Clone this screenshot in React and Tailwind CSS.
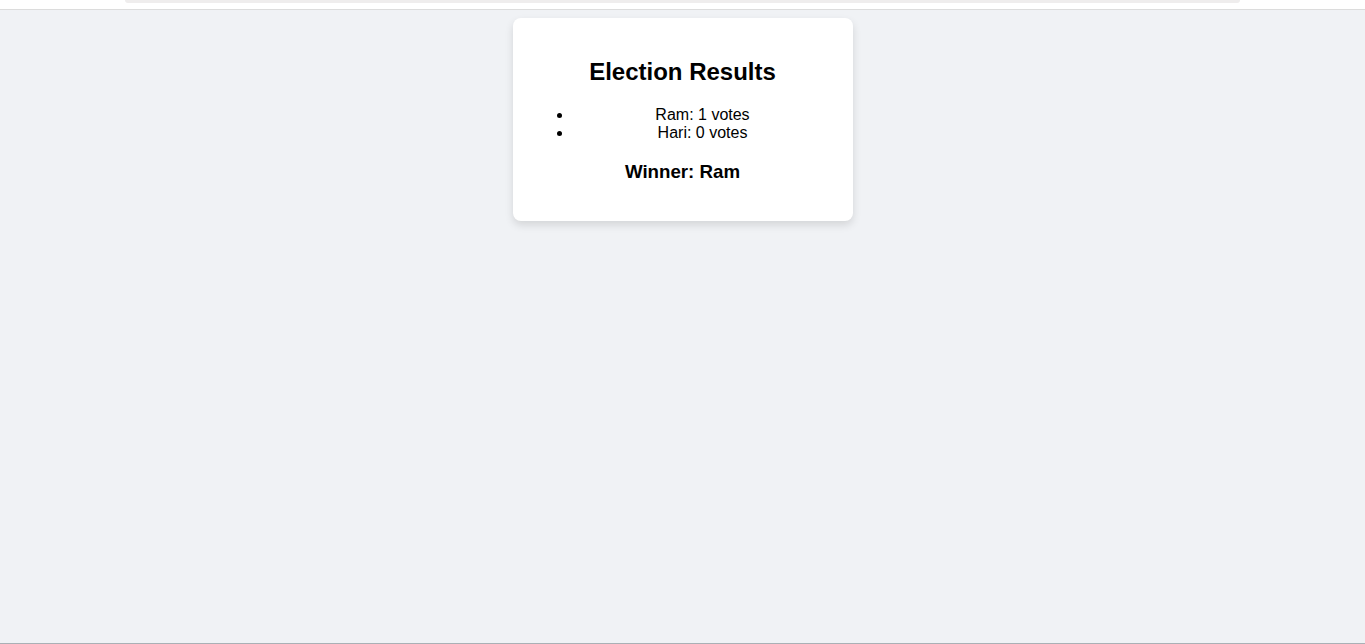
export default function App() {
  return (
    <div className="min-h-[644px] bg-[#f0f2f5] font-['Liberation_Sans',Arial,sans-serif] text-black flex flex-col">
      {/* top strip, scrolled-off header */}
      <div className="h-[10px] bg-white border-b border-[#dcdcdc] flex justify-center">
        <div className="w-[1115px] h-[3px] bg-[#efeded] rounded-b-lg"></div>
      </div>

      <div className="flex-1 flex justify-center items-start pt-2 border-b border-[#aab0b5]">
        <div className="w-[340px] bg-white rounded-lg p-5 shadow-[0_4px_8px_rgba(0,0,0,0.12)] text-center">
          <h2 className="text-2xl font-bold my-[19.92px] leading-[normal]">Election Results</h2>
          <ul className="list-disc pl-10 my-4 text-base leading-[normal]">
            <li>Ram: 1 votes</li>
            <li>Hari: 0 votes</li>
          </ul>
          <h3 className="text-[18.72px] font-bold my-[18.72px] leading-[normal]">Winner: Ram</h3>
        </div>
      </div>
    </div>
  );
}
